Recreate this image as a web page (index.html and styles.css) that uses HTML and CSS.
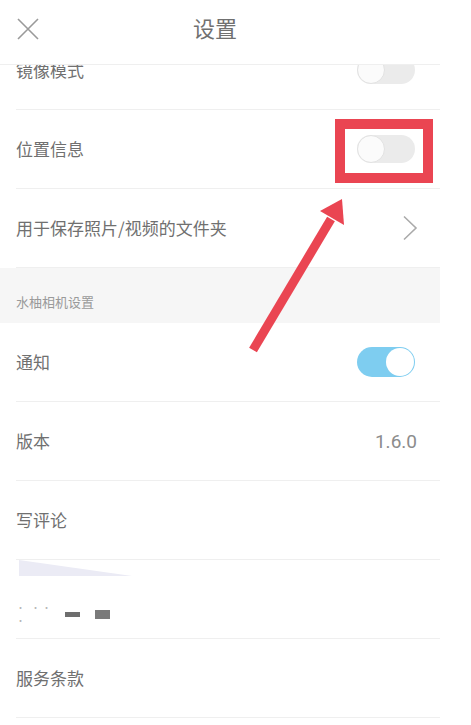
FILE: index.html
```html
<!DOCTYPE html>
<html lang="zh-CN">
<head>
<meta charset="utf-8">
<title>设置</title>
<link rel="stylesheet" href="styles.css">
</head>
<body>
<div class="screen">
  <header class="topbar">
    <svg class="close" width="22" height="22" viewBox="0 0 22 22"><path d="M1 1 L21 21 M21 1 L1 21" stroke="#9a9a9a" stroke-width="1.6" fill="none"/></svg>
    <h1 class="title">设置</h1>
    <span></span>
  </header>
  <div class="list">
    <div class="row row-clipped">
      <span class="label">镜像模式</span>
      <span class="toggle"><span class="knob"></span></span>
    </div>
    <div class="row">
      <span class="label">位置信息</span>
      <span class="toggle"><span class="knob"></span></span>
    </div>
    <div class="row row-nav">
      <span class="label">用于保存照片/视频的文件夹</span>
      <svg class="chevron" width="16" height="26" viewBox="0 0 16 26"><path d="M2 1.5 L14 13 L2 24.5" stroke="#aaaaaa" stroke-width="1.6" fill="none"/></svg>
    </div>
    <div class="section">水柚相机设置</div>
    <div class="row">
      <span class="label">通知</span>
      <span class="toggle toggle-on"><span class="knob"></span></span>
    </div>
    <div class="row">
      <span class="label">版本</span>
      <span class="value">1.6.0</span>
    </div>
    <div class="row">
      <span class="label">写评论</span>
    </div>
    <div class="row row-redacted">
      <span class="smudge"></span>
      <span class="blocks">
        <span class="dots">· ·· ·</span>
        <span class="blk blk-a"></span>
        <span class="blk blk-b"></span>
      </span>
    </div>
    <div class="row">
      <span class="label">服务条款</span>
    </div>
  </div>
  <div class="highlight"></div>
  <svg class="arrow" width="440" height="725" viewBox="0 0 440 725">
    <line x1="253" y1="350" x2="331" y2="219" stroke="#ea4552" stroke-width="9"/>
    <polygon points="320,211 342,199 344,225" fill="#ea4552"/>
  </svg>
</div>
</body>
</html>
```
FILE: styles.css
```css
* { box-sizing: border-box; }
html, body { margin: 0; padding: 0; background: #ffffff; }
body {
  font-family: "Noto Sans CJK SC", "Noto Sans", sans-serif;
  color: #707070;
  width: 471px;
  height: 725px;
  overflow: hidden;
}
.screen {
  position: relative;
  width: 440px;
  height: 725px;
  background: #ffffff;
}
.topbar {
  height: 65px;
  border-bottom: 1px solid #efefef;
  display: grid;
  grid-template-columns: 1fr auto 1fr;
  align-items: start;
  padding-right: 10px;
  padding-top: 12px;
  position: relative;
  z-index: 1;
  background: #ffffff;
}
.close { margin-left: 17px; margin-top: 6px; display: block; }
.title {
  margin: 0;
  font-size: 22px;
  line-height: 30px;
  font-weight: 400;
  color: #707070;
}
.list {
  height: 660px;
  overflow: hidden;
}
.row {
  height: 79px;
  margin-left: 16px;
  padding-right: 25px;
  border-bottom: 1px solid #efefef;
  display: flex;
  align-items: center;
  justify-content: space-between;
}
.row-clipped { margin-top: -34px; }
.row-nav { padding-right: 22px; }
.label {
  font-size: 17px;
  line-height: 24px;
  color: #707070;
}
.value {
  font-family: "Roboto", "Noto Sans", sans-serif;
  font-size: 19px;
  color: #8c8c8c;
  margin-right: -2px;
}
.chevron { display: block; }
.toggle {
  width: 58px;
  height: 28px;
  border-radius: 14px;
  background: #ebebeb;
  display: flex;
  align-items: center;
  justify-content: flex-start;
}
.knob {
  width: 28px;
  height: 28px;
  border-radius: 50%;
  background: #fbfbfb;
  border: 1px solid #e2e2e2;
}
.toggle-on {
  background: #7ecdf0;
  justify-content: flex-end;
  height: 30px;
  border-radius: 15px;
}
.toggle-on .knob {
  width: 28px;
  height: 28px;
  margin-right: 1px;
  background: #ffffff;
  border: none;
}
.section {
  height: 55px;
  background: #f6f6f6;
  padding: 25px 0 0 16px;
  font-size: 13px;
  line-height: 18px;
  color: #9a9a9a;
}
.row-redacted {
  position: relative;
  align-items: flex-start;
  padding-top: 41px;
}
.smudge {
  position: absolute;
  left: 3px;
  top: 0;
  width: 113px;
  height: 16px;
  background: #ebebf5;
  clip-path: polygon(0 0, 100% 100%, 0 100%);
}
.blocks {
  display: flex;
  align-items: center;
  gap: 0;
}
.dots {
  font-size: 9px;
  color: #b5b5b5;
  letter-spacing: 2px;
  width: 49px;
}
.blk { display: block; background: #6e6e6e; }
.blk-a { width: 15px; height: 5px; margin-left: 0; }
.blk-b { width: 15px; height: 9px; margin-left: 15px; background: #7a7a7a; }
.highlight {
  position: absolute;
  left: 335px;
  top: 119px;
  width: 98px;
  height: 64px;
  border: 10px solid #ea4552;
}
.arrow {
  position: absolute;
  left: 0;
  top: 0;
  pointer-events: none;
}
```
